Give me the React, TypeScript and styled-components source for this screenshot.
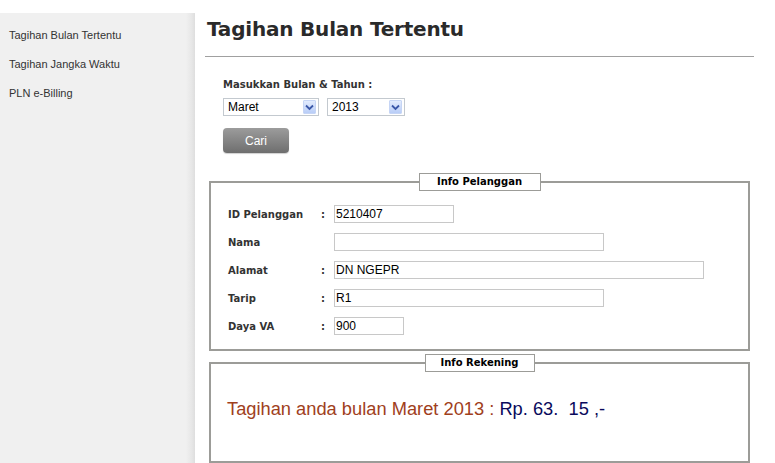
import React from "react";
import styled, { createGlobalStyle } from "styled-components";

const GlobalStyle = createGlobalStyle`
  html, body {
    margin: 0;
    padding: 0;
    background: #ffffff;
  }
  body {
    font-family: "Liberation Sans", Arial, sans-serif;
    color: #333;
  }
`;

const Page = styled.div`
  display: flex;
  align-items: stretch;
  padding-top: 13px;
  height: 463px;
  box-sizing: border-box;
  overflow: hidden;
`;

const Sidebar = styled.nav`
  width: 195px;
  flex-shrink: 0;
  background: linear-gradient(to right, #f0f0f0 0, #f0f0f0 186px, #e6e6e6 192px, #dedede 195px);
  padding-top: 15px;
  display: flex;
  flex-direction: column;
  gap: 14px;
`;

const SideLink = styled.a`
  display: block;
  padding-left: 9px;
  font-family: "Liberation Sans", Arial, sans-serif;
  font-size: 11px;
  line-height: 15px;
  color: #333;
  text-decoration: none;
`;

const Main = styled.main`
  flex: 1;
  padding: 0 21px 0 10px;
  display: flex;
  flex-direction: column;
`;

const Title = styled.h1`
  margin: 0;
  padding: 3px 0 0 2px;
  font-family: "DejaVu Sans", Tahoma, sans-serif;
  font-size: 20px;
  line-height: 26px;
  font-weight: bold;
  color: #2a2a2a;
  letter-spacing: -0.2px;
`;

const Rule = styled.hr`
  margin: 14px 0 0 0;
  border: none;
  border-top: 1px solid #a0a0a0;
  height: 0;
`;

const SearchForm = styled.form`
  padding: 22px 0 0 18px;
  display: flex;
  flex-direction: column;
  align-items: flex-start;
`;

const SmallLabel = styled.label`
  font-family: "DejaVu Sans", Verdana, sans-serif;
  font-size: 10px;
  font-weight: bold;
  color: #333;
  line-height: 12px;
`;

const SelectRow = styled.div`
  display: flex;
  gap: 8px;
  margin-top: 7px;
`;

const SelectBox = styled.div<{ $width: number }>`
  width: ${(p) => p.$width}px;
  height: 18px;
  box-sizing: border-box;
  border: 1px solid #c3c9cf;
  background: #fff;
  display: flex;
  align-items: center;
  justify-content: space-between;
  padding: 0 2px 0 4px;
  font-family: "Liberation Sans", Arial, sans-serif;
  font-size: 12px;
  color: #000;
`;

const ArrowButton = styled.span`
  width: 13px;
  height: 14px;
  box-sizing: border-box;
  border: 1px solid #c6d5f5;
  border-radius: 1px;
  background: linear-gradient(to bottom, #e2ebfd, #b9cdf7);
  display: flex;
  align-items: center;
  justify-content: center;
`;

const SearchButton = styled.button`
  margin-top: 12px;
  width: 66px;
  height: 25px;
  border: none;
  border-radius: 4px;
  background: linear-gradient(to bottom, #9c9c9c, #6e6e6e);
  box-shadow: 0 1px 1px #d0d0d0;
  color: #fff;
  font-family: "Liberation Sans", Arial, sans-serif;
  font-size: 12px;
  padding: 0;
`;

const Fieldset = styled.fieldset<{ $gap: number; $height?: number }>`
  margin: ${(p) => p.$gap}px 0 0 4px;
  padding: 0;
  border: 2px solid #9c9c98;
  ${(p) => (p.$height ? `height: ${p.$height}px;` : "")}
  box-sizing: border-box;
  min-width: 0;
  width: 541px;
`;

const Legend = styled.legend<{ $width: number }>`
  margin: 0 auto;
  padding: 0;
  width: ${(p) => p.$width}px;
  height: 18px;
  box-sizing: border-box;
  border: 1px solid #9c9c98;
  background: #fff;
  text-align: center;
  font-family: "DejaVu Sans", Verdana, sans-serif;
  font-size: 10px;
  font-weight: bold;
  line-height: 15px;
  color: #000;
`;

const InfoGrid = styled.div`
  display: grid;
  grid-template-columns: 93px 13px auto;
  grid-auto-rows: 18px;
  row-gap: 10px;
  align-items: center;
  padding: 14px 0 14px 17px;
`;

const RowLabel = styled.span`
  font-family: "DejaVu Sans", Verdana, sans-serif;
  font-size: 10px;
  font-weight: bold;
  color: #333;
`;

const Colon = styled.span`
  font-family: "DejaVu Sans", Verdana, sans-serif;
  font-size: 10px;
  font-weight: bold;
  color: #333;
`;

const Field = styled.input<{ $width: number }>`
  width: ${(p) => p.$width}px;
  height: 18px;
  box-sizing: border-box;
  border: 1px solid #c8c8c8;
  padding: 0 1px;
  font-family: "Liberation Sans", Arial, sans-serif;
  font-size: 12px;
  color: #000;
  background: #fff;
  outline: none;
`;

const BillLine = styled.p`
  margin: 26px 0 0 16px;
  font-family: "Liberation Sans", Arial, sans-serif;
  font-size: 18.3px;
  line-height: 22px;
  color: #a0401c;
`;

const Amount = styled.span`
  color: #0a0a5c;
  white-space: pre;
`;

const Chevron = () => (
  <svg width="9" height="7" viewBox="0 0 9 7">
    <path d="M1 1.5 L4.5 5 L8 1.5" fill="none" stroke="#3a57a8" strokeWidth="1.8" />
  </svg>
);

const rows = [
  { label: "ID Pelanggan", colon: true, value: "5210407", width: 120 },
  { label: "Nama", colon: false, value: "", width: 270 },
  { label: "Alamat", colon: true, value: "DN NGEPR", width: 370 },
  { label: "Tarip", colon: true, value: "R1", width: 270 },
  { label: "Daya VA", colon: true, value: "900", width: 70 },
];

export default function App() {
  return (
    <>
      <GlobalStyle />
      <Page>
        <Sidebar>
          <SideLink href="#">Tagihan Bulan Tertentu</SideLink>
          <SideLink href="#">Tagihan Jangka Waktu</SideLink>
          <SideLink href="#">PLN e-Billing</SideLink>
        </Sidebar>
        <Main>
          <Title>Tagihan Bulan Tertentu</Title>
          <Rule />
          <SearchForm onSubmit={(e) => e.preventDefault()}>
            <SmallLabel>Masukkan Bulan &amp; Tahun :</SmallLabel>
            <SelectRow>
              <SelectBox $width={96}>
                Maret
                <ArrowButton>
                  <Chevron />
                </ArrowButton>
              </SelectBox>
              <SelectBox $width={78}>
                2013
                <ArrowButton>
                  <Chevron />
                </ArrowButton>
              </SelectBox>
            </SelectRow>
            <SearchButton type="submit">Cari</SearchButton>
          </SearchForm>
          <Fieldset $gap={20}>
            <Legend $width={122}>Info Pelanggan</Legend>
            <InfoGrid>
              {rows.map((r) => (
                <React.Fragment key={r.label}>
                  <RowLabel>{r.label}</RowLabel>
                  <Colon>{r.colon ? ":" : ""}</Colon>
                  <Field $width={r.width} defaultValue={r.value} readOnly />
                </React.Fragment>
              ))}
            </InfoGrid>
          </Fieldset>
          <Fieldset $gap={3} $height={160}>
            <Legend $width={110}>Info Rekening</Legend>
            <BillLine>
              Tagihan anda bulan Maret 2013 : <Amount>Rp. 63.  15 ,-</Amount>
            </BillLine>
          </Fieldset>
        </Main>
      </Page>
    </>
  );
}
